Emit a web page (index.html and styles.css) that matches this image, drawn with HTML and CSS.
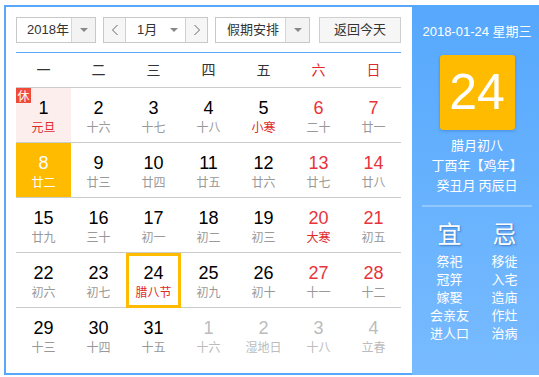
FILE: index.html
```html
<!DOCTYPE html>
<html lang="zh-CN">
    <head>
        <meta charset="utf-8">
        <title>万年历</title>
        <link rel="stylesheet" href="styles.css">
    </head>
    <body>
        <div class="calendar">
            <div class="main">
                <div class="toolbar">
                    <div class="select year-select">
                        <span class="select-text">2018年</span>
                        <span class="select-arrow"><i class="caret"></i></span>
                    </div>
                    <div class="month-picker">
                        <span class="nav-btn">
                            <svg width="8" height="12" viewBox="0 0 8 12"><polyline points="6.5,1 1.5,6 6.5,11" fill="none" stroke="#666" stroke-width="1"/></svg>
                        </span>
                        <span class="month-text">1月</span>
                        <span class="month-arrow"><i class="caret"></i></span>
                        <span class="nav-btn next">
                            <svg width="8" height="12" viewBox="0 0 8 12"><polyline points="1.5,1 6.5,6 1.5,11" fill="none" stroke="#666" stroke-width="1"/></svg>
                        </span>
                    </div>
                    <div class="select holiday-select">
                        <span class="select-text">假期安排</span>
                        <span class="select-arrow"><i class="caret"></i></span>
                    </div>
                    <div class="today-btn">返回今天</div>
                </div>

                <div class="weekdays">
                    <span>一</span><span>二</span><span>三</span><span>四</span><span>五</span>
                    <span class="weekend">六</span><span class="weekend">日</span>
                </div>

                <div class="days">
                    <div class="day rest"><b class="rest-tag">休</b><span class="num">1</span><span class="lunar festival">元旦</span></div>
                    <div class="day"><span class="num">2</span><span class="lunar">十六</span></div>
                    <div class="day"><span class="num">3</span><span class="lunar">十七</span></div>
                    <div class="day"><span class="num">4</span><span class="lunar">十八</span></div>
                    <div class="day"><span class="num">5</span><span class="lunar festival">小寒</span></div>
                    <div class="day weekend"><span class="num">6</span><span class="lunar">二十</span></div>
                    <div class="day weekend"><span class="num">7</span><span class="lunar">廿一</span></div>

                    <div class="day selected"><span class="num">8</span><span class="lunar">廿二</span></div>
                    <div class="day"><span class="num">9</span><span class="lunar">廿三</span></div>
                    <div class="day"><span class="num">10</span><span class="lunar">廿四</span></div>
                    <div class="day"><span class="num">11</span><span class="lunar">廿五</span></div>
                    <div class="day"><span class="num">12</span><span class="lunar">廿六</span></div>
                    <div class="day weekend"><span class="num">13</span><span class="lunar">廿七</span></div>
                    <div class="day weekend"><span class="num">14</span><span class="lunar">廿八</span></div>

                    <div class="day"><span class="num">15</span><span class="lunar">廿九</span></div>
                    <div class="day"><span class="num">16</span><span class="lunar">三十</span></div>
                    <div class="day"><span class="num">17</span><span class="lunar">初一</span></div>
                    <div class="day"><span class="num">18</span><span class="lunar">初二</span></div>
                    <div class="day"><span class="num">19</span><span class="lunar">初三</span></div>
                    <div class="day weekend"><span class="num">20</span><span class="lunar festival">大寒</span></div>
                    <div class="day weekend"><span class="num">21</span><span class="lunar">初五</span></div>

                    <div class="day"><span class="num">22</span><span class="lunar">初六</span></div>
                    <div class="day"><span class="num">23</span><span class="lunar">初七</span></div>
                    <div class="day today"><span class="num">24</span><span class="lunar festival">腊八节</span></div>
                    <div class="day"><span class="num">25</span><span class="lunar">初九</span></div>
                    <div class="day"><span class="num">26</span><span class="lunar">初十</span></div>
                    <div class="day weekend"><span class="num">27</span><span class="lunar">十一</span></div>
                    <div class="day weekend"><span class="num">28</span><span class="lunar">十二</span></div>

                    <div class="day last"><span class="num">29</span><span class="lunar">十三</span></div>
                    <div class="day last"><span class="num">30</span><span class="lunar">十四</span></div>
                    <div class="day last"><span class="num">31</span><span class="lunar">十五</span></div>
                    <div class="day last other"><span class="num">1</span><span class="lunar">十六</span></div>
                    <div class="day last other"><span class="num">2</span><span class="lunar">湿地日</span></div>
                    <div class="day last other"><span class="num">3</span><span class="lunar">十八</span></div>
                    <div class="day last other"><span class="num">4</span><span class="lunar">立春</span></div>
                </div>
            </div>

            <div class="side">
                <div class="side-date">2018-01-24 星期三</div>
                <div class="side-day">24</div>
                <div class="side-lunar">
                    <p>腊月初八</p>
                    <p>丁酉年【鸡年】</p>
                    <p>癸丑月 丙辰日</p>
                </div>
                <div class="side-line"></div>
                <div class="almanac">
                    <div class="almanac-col">
                        <h3>宜</h3>
                        <p>祭祀</p><p>冠笄</p><p>嫁娶</p><p>会亲友</p><p>进人口</p>
                    </div>
                    <div class="almanac-col">
                        <h3>忌</h3>
                        <p>移徙</p><p>入宅</p><p>造庙</p><p>作灶</p><p>治病</p>
                    </div>
                </div>
            </div>
        </div>
    </body>
</html>
```

FILE: styles.css
```css
html, body {
    margin: 0;
    padding: 0;
    height: 100%;
    overflow: hidden;
    background: #fff;
}
body {
    font-family: "Liberation Sans", "Noto Sans CJK SC", sans-serif;
    color: #333;
}
p, h3 { margin: 0; }

.calendar {
    display: flex;
    width: 538px;
    margin: 5px 0 0 4px;
}

/* left part: toolbar + month grid */
.main {
    width: 396px;
    padding: 10px 0 0 10px;
    height: 356px;
    border: 2px solid #57a8fd;
    border-right: none;
}

.toolbar {
    display: flex;
    height: 26px;
    font-family: "Liberation Sans", "Noto Sans CJK SC", sans-serif;
    font-size: 13px;
    color: #333;
}
.select, .month-picker {
    display: flex;
    box-sizing: border-box;
    height: 26px;
    border: 1px solid #c8c8c8;
    background: #fff;
}
.select-text {
    flex: 1;
    line-height: 24px;
    padding-left: 10px;
}
.select-arrow {
    width: 23px;
    border-left: 1px solid #d6d6d6;
    background: #f3f3f3;
    display: flex;
    align-items: center;
    justify-content: center;
}
.caret {
    width: 0;
    height: 0;
    border-left: 4px solid transparent;
    border-right: 4px solid transparent;
    border-top: 4px solid #888;
}
.year-select { width: 80px; }
.month-picker { width: 105px; margin-left: 7px; }
.holiday-select { width: 95px; margin-left: 7px; }
.holiday-select .select-text { padding-left: 11px; }

.nav-btn {
    width: 21px;
    background: #f6f6f6;
    border-right: 1px solid #d0d0d0;
    display: flex;
    align-items: center;
    justify-content: center;
}
.nav-btn.next {
    border-right: none;
    border-left: 1px solid #d0d0d0;
}
.month-text {
    flex: 1;
    line-height: 24px;
    padding-left: 11px;
}
.month-arrow {
    width: 22px;
    display: flex;
    align-items: center;
    justify-content: center;
}

.today-btn {
    box-sizing: border-box;
    width: 82px;
    height: 26px;
    margin-left: 9px;
    border: 1px solid #cfcfcf;
    background: #f6f6f6;
    text-align: center;
    line-height: 24px;
}

.weekdays {
    display: grid;
    grid-template-columns: repeat(7, 55px);
    width: 385px;
    margin-top: 9px;
    border-top: 1px solid #57a8fd;
    border-bottom: 1px solid #cccccc;
    height: 34px;
    line-height: 34px;
    text-align: center;
    font-size: 14px;
    color: #333;
}
.weekdays .weekend { color: #e02a2a; }

.days {
    display: grid;
    grid-template-columns: repeat(7, 55px);
    width: 385px;
}
.day {
    position: relative;
    box-sizing: border-box;
    height: 55px;
    border-bottom: 1px solid #cccccc;
    padding-top: 10px;
    display: flex;
    flex-direction: column;
    align-items: center;
}
.day.last { border-bottom: none; }
.num {
    font-size: 18px;
    line-height: 20px;
    color: #000;
}
.lunar {
    font-family: "Noto Sans CJK SC", sans-serif;
    font-size: 12px;
    line-height: 18px;
    color: #999;
}
.day.weekend .num { color: #e8333c; }
.lunar.festival { color: #e02a2a; }

.day.rest { background: #fdeeee; }
.rest-tag {
    position: absolute;
    top: 0;
    left: 0;
    width: 15px;
    height: 15px;
    background: #f04a3a;
    color: #fff;
    font-weight: normal;
    font-family: "Noto Sans CJK SC", sans-serif;
    font-size: 12px;
    line-height: 15px;
    text-align: center;
}
.day.selected { background: #ffbb00; }
.day.selected .num, .day.selected .lunar { color: #fff; }
.day.today {
    outline: 3px solid #ffbb00;
    outline-offset: -3px;
}
.day.other .num, .day.other .lunar { color: #bcbcbc; }

/* right part: today's info */
.side {
    width: 130px;
    background: linear-gradient(#56a8fd, #78bbff);
    color: #fff;
    text-align: center;
    font-family: "Liberation Sans", "Noto Sans CJK SC", sans-serif;
    padding-top: 17px;
}
.side-date {
    font-size: 13px;
    line-height: 20px;
}
.side-day {
    width: 75px;
    height: 75px;
    margin: 13px auto 0;
    background: #ffbb00;
    border-radius: 3px;
    box-shadow: 0 1px 3px rgba(30, 80, 160, 0.35);
    font-size: 50px;
    line-height: 75px;
}
.side-lunar {
    margin-top: 5px;
    font-family: "Noto Sans CJK SC", sans-serif;
    font-size: 13px;
    line-height: 20px;
}
.side-line {
    height: 2px;
    margin: 10px 10px 0;
    background: #93c8ff;
}
.almanac {
    display: flex;
    justify-content: center;
    margin-top: 11px;
}
.almanac-col {
    width: 55px;
    font-family: "Noto Sans CJK SC", sans-serif;
}
.almanac-col h3 {
    font-size: 24px;
    font-weight: normal;
    line-height: 30px;
    margin-bottom: 4px;
    text-shadow: 1px 1px 2px rgba(20, 60, 130, 0.5);
}
.almanac-col p {
    font-size: 13px;
    line-height: 18px;
}
```
